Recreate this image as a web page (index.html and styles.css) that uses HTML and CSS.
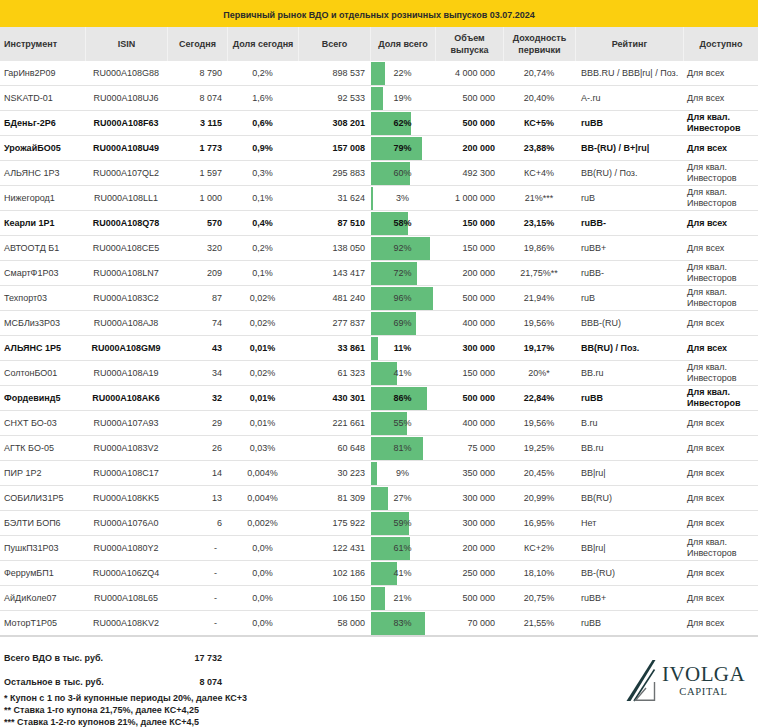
FILE: index.html
```html
<!DOCTYPE html>
<html lang="ru">
<head>
<meta charset="utf-8">
<title>Первичный рынок ВДО</title>
<link rel="stylesheet" href="styles.css">
</head>
<body>
<div class="title">Первичный рынок ВДО и отдельных розничных выпусков 03.07.2024</div>
<div class="row head">
  <div class="c l">Инструмент</div>
  <div class="c">ISIN</div>
  <div class="c">Сегодня</div>
  <div class="c">Доля сегодня</div>
  <div class="c">Всего</div>
  <div class="c">Доля всего</div>
  <div class="c">Объем<br>выпуска</div>
  <div class="c">Доходность<br>первички</div>
  <div class="c">Рейтинг</div>
  <div class="c">Доступно</div>
</div>

<div class="row"><div class="c l">ГарИнв2P09</div><div class="c m">RU000A108G88</div><div class="c r">8 790</div><div class="c m">0,2%</div><div class="c r">898 537</div><div class="c bc"><div class="fill" style="width:14.2px"></div><span class="pct">22%</span></div><div class="c r2">4 000 000</div><div class="c m">20,74%</div><div class="c rt">BBB.RU / BBB|ru| / Поз.</div><div class="c av">Для всех</div></div>
<div class="row"><div class="c l">NSKATD-01</div><div class="c m">RU000A108UJ6</div><div class="c r">8 074</div><div class="c m">1,6%</div><div class="c r">92 533</div><div class="c bc"><div class="fill" style="width:12.3px"></div><span class="pct">19%</span></div><div class="c r2">500 000</div><div class="c m">20,40%</div><div class="c rt">A-.ru</div><div class="c av">Для всех</div></div>
<div class="row b"><div class="c l">БДеньг-2Р6</div><div class="c m">RU000A108F63</div><div class="c r">3 115</div><div class="c m">0,6%</div><div class="c r">308 201</div><div class="c bc"><div class="fill" style="width:40px"></div><span class="pct">62%</span></div><div class="c r2">500 000</div><div class="c m">КС+5%</div><div class="c rt">ruBB</div><div class="c av">Для квал.<br>Инвесторов</div></div>
<div class="row b"><div class="c l">УрожайБО05</div><div class="c m">RU000A108U49</div><div class="c r">1 773</div><div class="c m">0,9%</div><div class="c r">157 008</div><div class="c bc"><div class="fill" style="width:51px"></div><span class="pct">79%</span></div><div class="c r2">200 000</div><div class="c m">23,88%</div><div class="c rt">BB-(RU) / B+|ru|</div><div class="c av">Для всех</div></div>
<div class="row"><div class="c l">АЛЬЯНС 1Р3</div><div class="c m">RU000A107QL2</div><div class="c r">1 597</div><div class="c m">0,3%</div><div class="c r">295 883</div><div class="c bc"><div class="fill" style="width:38.7px"></div><span class="pct">60%</span></div><div class="c r2">492 300</div><div class="c m">КС+4%</div><div class="c rt">BB(RU) / Поз.</div><div class="c av">Для квал.<br>Инвесторов</div></div>
<div class="row"><div class="c l">Нижегород1</div><div class="c m">RU000A108LL1</div><div class="c r">1 000</div><div class="c m">0,1%</div><div class="c r">31 624</div><div class="c bc"><div class="fill" style="width:1.9px"></div><span class="pct">3%</span></div><div class="c r2">1 000 000</div><div class="c m">21%***</div><div class="c rt">ruB</div><div class="c av">Для квал.<br>Инвесторов</div></div>
<div class="row b"><div class="c l">Кеарли 1Р1</div><div class="c m">RU000A108Q78</div><div class="c r">570</div><div class="c m">0,4%</div><div class="c r">87 510</div><div class="c bc"><div class="fill" style="width:37.4px"></div><span class="pct">58%</span></div><div class="c r2">150 000</div><div class="c m">23,15%</div><div class="c rt">ruBB-</div><div class="c av">Для всех</div></div>
<div class="row"><div class="c l">АВТООТД Б1</div><div class="c m">RU000A108CE5</div><div class="c r">320</div><div class="c m">0,2%</div><div class="c r">138 050</div><div class="c bc"><div class="fill" style="width:59.3px"></div><span class="pct">92%</span></div><div class="c r2">150 000</div><div class="c m">19,86%</div><div class="c rt">ruBB+</div><div class="c av">Для всех</div></div>
<div class="row"><div class="c l">СмартФ1Р03</div><div class="c m">RU000A108LN7</div><div class="c r">209</div><div class="c m">0,1%</div><div class="c r">143 417</div><div class="c bc"><div class="fill" style="width:46.4px"></div><span class="pct">72%</span></div><div class="c r2">200 000</div><div class="c m">21,75%**</div><div class="c rt">ruBB-</div><div class="c av">Для квал.<br>Инвесторов</div></div>
<div class="row"><div class="c l">Техпорт03</div><div class="c m">RU000A1083C2</div><div class="c r">87</div><div class="c m">0,02%</div><div class="c r">481 240</div><div class="c bc"><div class="fill" style="width:61.9px"></div><span class="pct">96%</span></div><div class="c r2">500 000</div><div class="c m">21,94%</div><div class="c rt">ruB</div><div class="c av">Для квал.<br>Инвесторов</div></div>
<div class="row"><div class="c l">МСБЛиз3Р03</div><div class="c m">RU000A108AJ8</div><div class="c r">74</div><div class="c m">0,02%</div><div class="c r">277 837</div><div class="c bc"><div class="fill" style="width:44.5px"></div><span class="pct">69%</span></div><div class="c r2">400 000</div><div class="c m">19,56%</div><div class="c rt">BBB-(RU)</div><div class="c av">Для всех</div></div>
<div class="row b"><div class="c l">АЛЬЯНС 1Р5</div><div class="c m">RU000A108GM9</div><div class="c r">43</div><div class="c m">0,01%</div><div class="c r">33 861</div><div class="c bc"><div class="fill" style="width:7.1px"></div><span class="pct">11%</span></div><div class="c r2">300 000</div><div class="c m">19,17%</div><div class="c rt">BB(RU) / Поз.</div><div class="c av">Для всех</div></div>
<div class="row"><div class="c l">СолтонБО01</div><div class="c m">RU000A108A19</div><div class="c r">34</div><div class="c m">0,02%</div><div class="c r">61 323</div><div class="c bc"><div class="fill" style="width:26.4px"></div><span class="pct">41%</span></div><div class="c r2">150 000</div><div class="c m">20%*</div><div class="c rt">BB.ru</div><div class="c av">Для квал.<br>Инвесторов</div></div>
<div class="row b"><div class="c l">Фордевинд5</div><div class="c m">RU000A108AK6</div><div class="c r">32</div><div class="c m">0,01%</div><div class="c r">430 301</div><div class="c bc"><div class="fill" style="width:55.5px"></div><span class="pct">86%</span></div><div class="c r2">500 000</div><div class="c m">22,84%</div><div class="c rt">ruBB</div><div class="c av">Для квал.<br>Инвесторов</div></div>
<div class="row"><div class="c l">СНХТ БО-03</div><div class="c m">RU000A107A93</div><div class="c r">29</div><div class="c m">0,01%</div><div class="c r">221 661</div><div class="c bc"><div class="fill" style="width:35.5px"></div><span class="pct">55%</span></div><div class="c r2">400 000</div><div class="c m">19,56%</div><div class="c rt">B.ru</div><div class="c av">Для всех</div></div>
<div class="row"><div class="c l">АГТК БО-05</div><div class="c m">RU000A1083V2</div><div class="c r">26</div><div class="c m">0,03%</div><div class="c r">60 648</div><div class="c bc"><div class="fill" style="width:52.2px"></div><span class="pct">81%</span></div><div class="c r2">75 000</div><div class="c m">19,25%</div><div class="c rt">BB.ru</div><div class="c av">Для всех</div></div>
<div class="row"><div class="c l">ПИР 1Р2</div><div class="c m">RU000A108C17</div><div class="c r">14</div><div class="c m">0,004%</div><div class="c r">30 223</div><div class="c bc"><div class="fill" style="width:5.8px"></div><span class="pct">9%</span></div><div class="c r2">350 000</div><div class="c m">20,45%</div><div class="c rt">BB|ru|</div><div class="c av">Для всех</div></div>
<div class="row"><div class="c l">СОБИЛИЗ1Р5</div><div class="c m">RU000A108KK5</div><div class="c r">13</div><div class="c m">0,004%</div><div class="c r">81 309</div><div class="c bc"><div class="fill" style="width:17.4px"></div><span class="pct">27%</span></div><div class="c r2">300 000</div><div class="c m">20,99%</div><div class="c rt">BB(RU)</div><div class="c av">Для всех</div></div>
<div class="row"><div class="c l">БЭЛТИ БОП6</div><div class="c m">RU000A1076A0</div><div class="c r">6</div><div class="c m">0,002%</div><div class="c r">175 922</div><div class="c bc"><div class="fill" style="width:38px"></div><span class="pct">59%</span></div><div class="c r2">300 000</div><div class="c m">16,95%</div><div class="c rt">Нет</div><div class="c av">Для всех</div></div>
<div class="row"><div class="c l">ПушкП31Р03</div><div class="c m">RU000A1080Y2</div><div class="c r dash">-</div><div class="c m">0,0%</div><div class="c r">122 431</div><div class="c bc"><div class="fill" style="width:39.3px"></div><span class="pct">61%</span></div><div class="c r2">200 000</div><div class="c m">КС+2%</div><div class="c rt">BB|ru|</div><div class="c av">Для квал.<br>Инвесторов</div></div>
<div class="row"><div class="c l">ФеррумБП1</div><div class="c m">RU000A106ZQ4</div><div class="c r dash">-</div><div class="c m">0,0%</div><div class="c r">102 186</div><div class="c bc"><div class="fill" style="width:26.4px"></div><span class="pct">41%</span></div><div class="c r2">250 000</div><div class="c m">18,10%</div><div class="c rt">BB-(RU)</div><div class="c av">Для всех</div></div>
<div class="row"><div class="c l">АйДиКоле07</div><div class="c m">RU000A108L65</div><div class="c r dash">-</div><div class="c m">0,0%</div><div class="c r">106 150</div><div class="c bc"><div class="fill" style="width:13.5px"></div><span class="pct">21%</span></div><div class="c r2">500 000</div><div class="c m">20,75%</div><div class="c rt">ruBB+</div><div class="c av">Для всех</div></div>
<div class="row last"><div class="c l">МоторТ1Р05</div><div class="c m">RU000A108KV2</div><div class="c r dash">-</div><div class="c m">0,0%</div><div class="c r">58 000</div><div class="c bc"><div class="fill" style="width:53.5px"></div><span class="pct">83%</span></div><div class="c r2">70 000</div><div class="c m">21,55%</div><div class="c rt">ruBB</div><div class="c av">Для всех</div></div>

<div class="bottom">
  <div class="notes">
    <div class="sum"><span>Всего ВДО в тыс. руб.</span><span class="val">17 732</span></div>
    <div class="sum"><span>Остальное в тыс. руб.</span><span class="val">8 074</span></div>
    <p>* Купон с 1 по 3-й купонные периоды 20%, далее КС+3</p>
    <p>** Ставка 1-го купона 21,75%, далее КС+4,25</p>
    <p>*** Ставка 1-2-го купонов 21%, далее КС+4,5</p>
  </div>
  <div class="logo">
    <svg class="mark" width="31" height="43" viewBox="0 0 31 43">
      <path d="M0.5 42 L4.5 42 L29.5 1 L26.5 1 Z" fill="#1d3a3d"/>
      <path d="M8 42 L28.5 10.5" stroke="#1d3a3d" stroke-width="1.6" fill="none"/>
      <path d="M28.5 23 L28.5 41.3 L9.5 41.3 L20 29" stroke="#6d7173" stroke-width="1.4" fill="none"/>
    </svg>
    <div class="brand">
      <div class="name">IVOLGA</div>
      <div class="sub">CAPITAL</div>
    </div>
  </div>
</div>
</body>
</html>
```
FILE: styles.css
```css
* { box-sizing: border-box; margin: 0; padding: 0; }
body {
  width: 758px;
  background: #fff;
  font-family: "Liberation Sans", Arial, sans-serif;
  font-size: 9px;
  color: #3a3a3a;
}
.title {
  height: 27px;
  background: #fbcf0f;
  display: flex;
  align-items: center;
  justify-content: center;
  font-weight: bold;
  color: #2b2b2b;
  padding-top: 2px;
}
.row {
  display: grid;
  grid-template-columns: 85px 82px 60px 71px 72px 65px 68px 72px 108px 75px;
  height: 25px;
  border-bottom: 1px solid #e3e3e3;
}
.row.b { font-weight: bold; color: #111; }
.row.last { border-bottom: 2px solid #d9d9d9; height: 26px; }
.c {
  display: flex;
  align-items: center;
  padding: 0 5px;
  line-height: 11px;
  white-space: nowrap;
}
.head {
  height: 34px;
  background: #e7e7e7;
  font-weight: bold;
  color: #333;
  border-bottom: none;
}
.head .c {
  justify-content: center;
  text-align: center;
  border-left: 1px solid #f2f2f2;
  line-height: 12px;
}
.head .c.l { justify-content: flex-start; border-left: none; padding-left: 4px; }
.c.l { padding-left: 4px; }
.c.m { justify-content: center; }
.c.r { justify-content: flex-end; }
.c.dash { padding-right: 10px; }
.c.r2 { justify-content: flex-end; padding-right: 8px; }
.c.rt { padding-left: 6px; }
.c.av { padding-left: 4px; }
.bc {
  display: grid;
  padding: 0;
  align-items: center;
}
.bc > * { grid-area: 1 / 1; }
.fill {
  justify-self: start;
  align-self: stretch;
  background: #63be7b;
  margin: 1px 0 0 1px;
}
.pct { justify-self: center; }

.bottom {
  display: flex;
  justify-content: space-between;
}
.notes {
  padding: 15px 0 0 4px;
  font-weight: bold;
  color: #1e1e1e;
  line-height: 12px;
}
.sum {
  display: grid;
  grid-template-columns: 163px 55px;
  margin-bottom: 12px;
}
.sum + .sum { margin-bottom: 4px; }
.val { text-align: right; }
.logo {
  display: flex;
  align-items: flex-start;
  margin: 22px 13px 0 0;
}
.mark { display: block; margin-right: 5px; }
.brand {
  display: flex;
  flex-direction: column;
  align-items: center;
  color: #1f3c3f;
  font-family: "Liberation Serif", "Times New Roman", serif;
  padding-top: 5px;
}
.name { font-size: 21px; line-height: 20px; letter-spacing: 0.4px; }
.sub { font-size: 10.5px; line-height: 12px; letter-spacing: 0.7px; margin-top: 2px; }
```
